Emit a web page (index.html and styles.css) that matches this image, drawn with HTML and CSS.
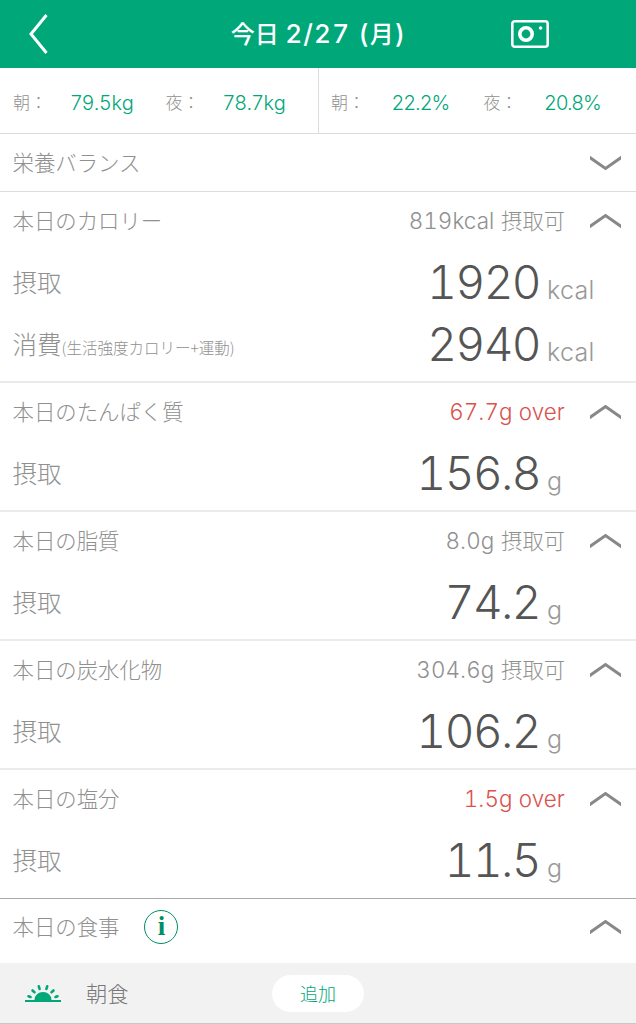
FILE: index.html
```
<!doctype html>
<html lang="ja">
  <head>
    <meta charset="utf-8">
    <meta name="viewport" content="width=device-width, initial-scale=1">
    <title>今日 2/27 (月)</title>
    <link rel="stylesheet" href="styles.css">
  </head>
  <body>
    <svg class="defs" width="0" height="0">
      <symbol id="chevron" viewBox="0 0 31 16"><path d="M-2 14.800 15.500 2.500 33 14.800"/></symbol>
    </svg>

    <header>
      <svg class="back" viewBox="0 0 20 40"><path d="M18.500 1 3 20 18.500 39"/></svg>
      <h1>今日 <span class="num">2/27 (</span>月<span class="num">)</span></h1>
      <svg class="camera" viewBox="0 0 38 28">
        <rect x="1.300" y="1.300" width="35.400" height="25.400" rx="2.500"/>
        <circle cx="15" cy="14" r="6.200"/>
        <circle class="dot" cx="29.600" cy="8" r="1.800"/>
      </svg>
    </header>

    <div class="body-data">
      <dl class="weight">
        <dt>朝：</dt><dd>79.5kg</dd>
        <dt>夜：</dt><dd>78.7kg</dd>
      </dl>
      <dl class="fat">
        <dt>朝：</dt><dd>22.2%</dd>
        <dt>夜：</dt><dd>20.8%</dd>
      </dl>
    </div>

    <section class="balance">
      <div class="head"><h2>栄養バランス</h2><svg class="chevron down"><use href="#chevron"/></svg></div>
    </section>

    <section>
      <div class="head">
        <h2>本日のカロリー</h2>
        <p class="rest"><span class="num">819kcal</span> 摂取可</p>
        <svg class="chevron"><use href="#chevron"/></svg>
      </div>
      <div class="row"><h3>摂取</h3><span class="value">1920</span><span class="unit">kcal</span></div>
      <div class="row"><h3>消費<small>(生活強度カロリー+運動)</small></h3><span class="value">2940</span><span class="unit">kcal</span></div>
    </section>

    <section>
      <div class="head">
        <h2>本日のたんぱく質</h2>
        <p class="rest over"><span class="num">67.7g over</span></p>
        <svg class="chevron"><use href="#chevron"/></svg>
      </div>
      <div class="row"><h3>摂取</h3><span class="value">156.8</span><span class="unit">g</span></div>
    </section>

    <section>
      <div class="head">
        <h2>本日の脂質</h2>
        <p class="rest"><span class="num">8.0g</span> 摂取可</p>
        <svg class="chevron"><use href="#chevron"/></svg>
      </div>
      <div class="row"><h3>摂取</h3><span class="value">74.2</span><span class="unit">g</span></div>
    </section>

    <section>
      <div class="head">
        <h2>本日の炭水化物</h2>
        <p class="rest"><span class="num">304.6g</span> 摂取可</p>
        <svg class="chevron"><use href="#chevron"/></svg>
      </div>
      <div class="row"><h3>摂取</h3><span class="value">106.2</span><span class="unit">g</span></div>
    </section>

    <section class="last">
      <div class="head">
        <h2>本日の塩分</h2>
        <p class="rest over"><span class="num">1.5g over</span></p>
        <svg class="chevron"><use href="#chevron"/></svg>
      </div>
      <div class="row"><h3>摂取</h3><span class="value">11.5</span><span class="unit">g</span></div>
    </section>

    <section class="meals">
      <div class="head">
        <h2>本日の食事</h2>
        <span class="info">i</span>
        <svg class="chevron"><use href="#chevron"/></svg>
      </div>
      <div class="meal">
        <svg class="sunrise" viewBox="0 0 36 18">
          <path class="sun" d="M0 16h9.500a8.500 8 0 0 1 17 0h9.500v2H0z"/>
          <path class="rays" d="M3.500 12.300 5.500 13M7.500 6.500l2 1.700M13.800 2.300l.8 2.700M22.200 2.300l-.8 2.700M28.500 6.500l-2 1.700M32.500 12.300 30.500 13"/>
        </svg>
        <h3>朝食</h3>
        <button>追加</button>
      </div>
    </section>
  </body>
</html>
```
FILE: styles.css
```
* { box-sizing: border-box; }
body { margin: 0; background: #fff; color: #909090; font-family: "Noto Sans CJK JP", sans-serif; font-weight: 300; }
h1, h2, h3, p, dl, dd { margin: 0; font-weight: 300; white-space: nowrap; }
svg { display: block; fill: none; flex: none; }
.defs { position: absolute; }
.num { font-family: "Inter", sans-serif; font-variant-numeric: tabular-nums; }

header { display: flex; align-items: center; height: 68px; padding: 0 87px 0 28px; background: #00a779; color: #fff; }
header h1 { flex: 1; padding: 0 0 3px 78px; font-size: 24px; font-weight: 500; text-align: center; }
header h1 .num { margin-left: 1px; font-size: 26px; font-weight: 500; letter-spacing: 1.2px; }
.back { width: 20px; height: 40px; stroke: #fff; stroke-width: 3; }
.camera { width: 38px; height: 28px; stroke: #fff; stroke-width: 2.6; }
.camera circle { stroke-width: 3.6; }
.camera .dot { fill: #fff; stroke: none; }

.body-data { display: flex; height: 66px; border-bottom: 1px solid #dcdcdc; }
.body-data dl { display: flex; align-items: center; width: 318px; padding: 3px 0 0 13px; }
.body-data .fat { border-left: 1px solid #dcdcdc; padding-left: 12px; }
.body-data dt { width: 43px; padding-bottom: 1px; font-size: 17px; }
.body-data dd { width: 110px; padding: 1px 0 0 15px; color: #00a779; font-family: "Inter", sans-serif; font-size: 20px; letter-spacing: 0.2px; }
.body-data .fat dd { padding-left: 18px; letter-spacing: -0.7px; }

section { border-bottom: 2px solid #ebebeb; padding-bottom: 7px; }
.head { display: flex; align-items: center; height: 58px; padding: 0 15px 0 12.5px; }
.head h2 { padding-bottom: 3px; font-size: 21.4px; }
.rest { margin-left: auto; margin-right: 25px; padding-bottom: 3px; font-size: 21.3px; }
.rest .num { margin-right: 2px; font-size: 22.4px; letter-spacing: 0.1px; }
.over { color: #d9534f; }
.over .num { margin-right: 0; }
.chevron { width: 31px; height: 16px; stroke: #888; stroke-width: 3; }
.down { transform: scaleY(-1); }
.balance { padding: 0; border-bottom: 1px solid #dcdcdc; }
.balance .head { height: 57px; }
.balance .chevron, .meals .chevron { margin-left: auto; }

.row { display: flex; align-items: baseline; height: 62px; padding-left: 12.5px; line-height: 64px; }
.row h3 { flex: 1; align-self: flex-start; padding-top: 1px; font-size: 24.5px; line-height: 62px; }
.row small { font-size: 15.5px; }
.value { color: #555; font-family: "Inter", sans-serif; font-size: 46px; font-variant-numeric: tabular-nums; letter-spacing: -1.6px; }
.unit { width: 89px; margin-left: 7px; color: #999; font-family: "Inter", sans-serif; font-size: 25px; letter-spacing: 0.3px; }

.last { padding-bottom: 8px; border-bottom: 1px solid #aaa; }
.meals { padding: 0; border: 0; }
.meals .head { height: 64px; padding-bottom: 8px; }
.info { width: 34px; height: 34px; margin-left: 25px; border: 1.5px solid #008c64; border-radius: 50%; color: #008c64; font: bold 27px/31px "Liberation Serif", serif; text-align: center; }
.meal { display: flex; align-items: center; height: 61px; padding-left: 25px; background: #f2f2f2; border-bottom: 1px solid #c8c8c8; }
.meal h3 { width: 186px; padding: 0 0 2px 25px; color: #777; font-size: 21.3px; }
.meal button { width: 92px; height: 37px; margin-left: 25px; padding: 0; border: 0; border-radius: 19px; background: #fff; color: #00a779; font: 300 18px "Noto Sans CJK JP", sans-serif; }
.sunrise { width: 36px; height: 18px; }
.sun { fill: #00a779; }
.rays { stroke: #00a779; stroke-width: 2.6; stroke-linecap: round; }
```
